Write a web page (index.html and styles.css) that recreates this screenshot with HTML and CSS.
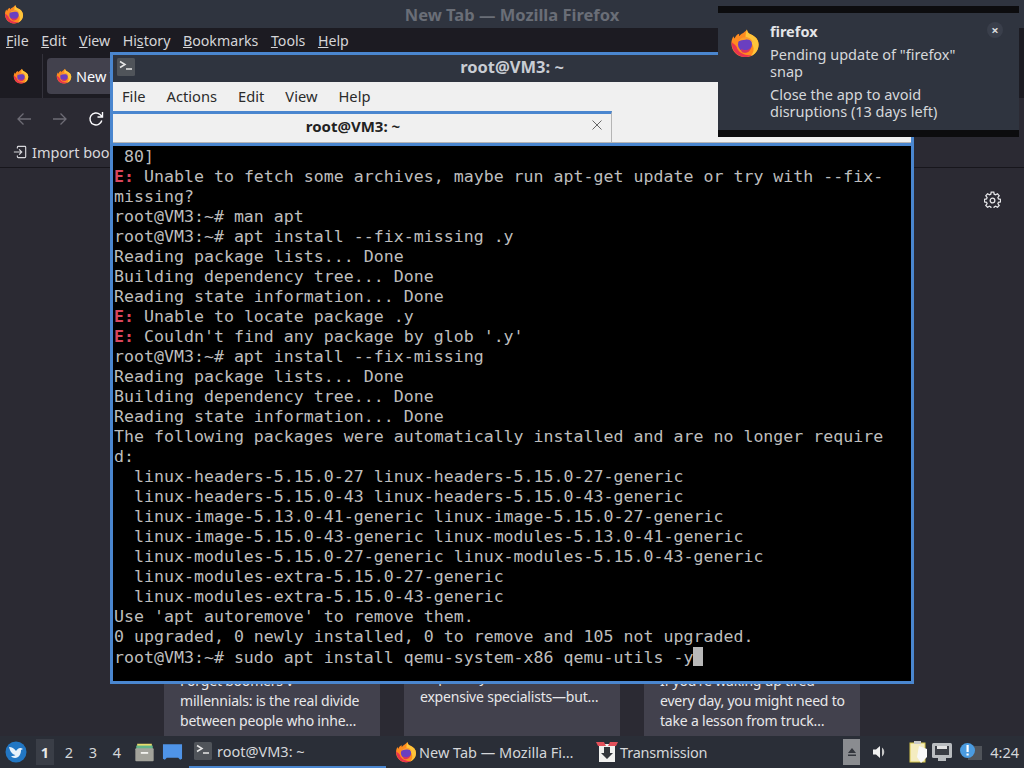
FILE: index.html
```html
<!DOCTYPE html>
<html lang="en">
<head>
<meta charset="utf-8">
<title>Desktop</title>
<link rel="stylesheet" href="styles.css">
</head>
<body>
<svg class="defs" width="0" height="0" aria-hidden="true">
  <defs>
    <symbol id="fx" viewBox="0 0 32 32">
      <path d="M16 31C7.5 31 1.5 24.5 1.5 16.5c0-3 .9-5.6 2.2-7.6.2 1 .7 1.8 1.3 2.4C5.600 8.500 7.500 6.500 10 6c-.5 1-.5 2 0 2.600C11.500 6 15.500 5 18 1.500c.5 3 2 4.500 4.500 5.500C27 9 30.500 12.500 30.500 17.500 30.500 25 24.500 31 16 31z" fill="#ff8a1f"/>
      <path d="M18 1.500c.5 3 2 4.500 4.500 5.500C27 9 30.500 12.500 30.500 17.500c0 6-3.500 10.500-8.500 12.500 3-3 4-7 2.500-11-1.500-4-5-5-7-7-1.500-2-1-6 .5-10.500z" fill="#ffc53a"/>
      <path d="M1.700 15C1.500 24 8 31 16 31c3 0 5.500-.8 7.500-2.200C17 30 9 27 7 20c-1-2-3.500-3-5.300-5z" fill="#e8344e"/>
      <circle cx="16" cy="17.500" r="7.500" fill="#6a3fc0"/>
      <path d="M9 14c2-3.500 6-5 10-4 3 .7 5 3 5.500 5.500-2-2.500-5-3.500-8-3-3 .3-5.500.8-7.500 1.500z" fill="#ff9d2a"/>
      <path d="M12 22c3 2.500 8 2 10.500-1.500-.5 4-4 6.500-7.500 6-2.500-.5-3.500-2.500-3-4.500z" fill="#d8345f"/>
    </symbol>
    <symbol id="prompt" viewBox="0 0 18 18">
      <rect width="18" height="18" rx="1.500" fill="#50545a"/>
      <path d="M3 3.500l5 3-5 3" fill="none" stroke="#e6e6e6" stroke-width="1.500"/>
      <path d="M9 11h6" stroke="#e6e6e6" stroke-width="1.500"/>
    </symbol>
  </defs>
</svg>

<div class="desktop">
  <div class="firefox">
    <div class="ff-title">
      <svg class="ff-title-logo"><use href="#fx"/></svg>
      <span class="ff-title-text">New Tab — Mozilla Firefox</span>
    </div>
    <nav class="ff-menu">
      <span><u>F</u>ile</span><span><u>E</u>dit</span><span><u>V</u>iew</span><span>Hi<u>s</u>tory</span><span><u>B</u>ookmarks</span><span><u>T</u>ools</span><span><u>H</u>elp</span>
    </nav>
    <div class="ff-tabs">
      <div class="ff-view"><svg class="ico16"><use href="#fx"/></svg></div>
      <div class="ff-tab"><svg class="ico16"><use href="#fx"/></svg><span>New Tab</span></div>
    </div>
    <div class="ff-toolbar">
      <svg class="tool dim" viewBox="0 0 16 16"><path d="M15 8H2M7.500 2.500L2 8l5.500 5.500" fill="none" stroke="currentColor" stroke-width="1.300"/></svg>
      <svg class="tool dim" viewBox="0 0 16 16"><path d="M1 8h13M8.500 2.500L14 8l-5.500 5.500" fill="none" stroke="currentColor" stroke-width="1.300"/></svg>
      <svg class="tool" viewBox="0 0 16 16"><path d="M13.800 9.500A6 6 0 1 1 12 3.500L14 5.500M14.500 1v5h-5" fill="none" stroke="currentColor" stroke-width="1.400"/></svg>
    </div>
    <div class="ff-bookmarks">
      <svg class="import" viewBox="0 0 16 16"><path d="M5 4V2.500A1 1 0 0 1 6 1.500h7.500a1 1 0 0 1 1 1v11a1 1 0 0 1-1 1H6a1 1 0 0 1-1-1V12M1 8h8M7 5l3 3-3 3" fill="none" stroke="currentColor" stroke-width="1.300"/></svg>
      <span>Import bookmarks…</span>
    </div>
    <main class="ff-content">
      <div class="gear-row">
        <svg class="gear" viewBox="0 0 16 16"><path d="M6.800 1h2.400l.4 2 1.300.6 1.800-1 1.600 1.800-1.200 1.700.5 1.300 2 .4v2.400l-2 .4-.5 1.300 1.200 1.700-1.600 1.700-1.800-1-1.300.6-.4 2H6.800l-.4-2-1.300-.6-1.800 1-1.600-1.700 1.200-1.700-.5-1.300-2-.4V7.800l2-.4.500-1.300L1.700 4.400l1.600-1.800 1.800 1 1.300-.6z" fill="none" stroke="currentColor" stroke-width="1.200"/><circle cx="8" cy="9" r="2.200" fill="none" stroke="currentColor" stroke-width="1.200"/></svg>
      </div>
      <div class="cards">
        <article class="card">Forget boomers v<br>millennials: is the real divide between people who inhe…</article>
        <article class="card short">Skip costly,<br>expensive specialists—but…</article>
        <article class="card">If you're waking up tired every day, you might need to take a lesson from truck…</article>
      </div>
    </main>
  </div>

  <footer class="panel">
    <svg class="start" viewBox="0 0 22 22"><circle cx="11" cy="11" r="10.500" fill="#2277c4"/><path d="M4 6c3 0 5 1.500 7 4 1-2 3-3.500 5-3l2 1-2 1c0 4-2 8-6 8-2 0-3-1-4-2 2 .3 3.500 0 4.500-1C7.500 13.500 5 10.500 4 6z" fill="#e8f2fb"/></svg>
    <div class="pager">
      <span class="page active">1</span><span class="page">2</span><span class="page">3</span><span class="page">4</span>
    </div>
    <svg class="launcher" viewBox="0 0 22 24"><path d="M3 3h16v6H3z" fill="#e7dc6c"/><path d="M2 5h18v4H2z" fill="#63b58a"/><rect x="1" y="8" width="20" height="14" rx="1" fill="#a3a39b"/><rect x="7" y="12" width="8" height="2" fill="#f2f2ee"/></svg>
    <svg class="launcher folder" viewBox="0 0 22 20"><path d="M1 2h20v15l-2 1-2-2H5l-2 2-2-1z" fill="#4f94e8"/></svg>
    <div class="task task-active"><svg class="ico18"><use href="#prompt"/></svg><span>root@VM3: ~</span></div>
    <div class="task task-ff"><svg class="ico22"><use href="#fx"/></svg><span>New Tab — Mozilla Fi…</span></div>
    <div class="task task-tr">
      <svg class="ico22" viewBox="0 0 22 22"><rect x="3" y="3" width="16" height="18" fill="#f1f1ef"/><path d="M0 1h8l2 4H2zM14 1h8l-2 4h-8z" fill="#e2505a"/><path d="M8 6h6v6h3l-6 6-6-6h3z" fill="#33363b"/></svg>
      <span>Transmission</span>
    </div>
    <div class="tray">
      <div class="eject"><svg viewBox="0 0 10 10" class="eject-ico"><path d="M5 1l4 5H1zM1 7.500h8V9H1z" fill="#33363d"/></svg></div>
      <svg class="tray-ico vol" viewBox="0 0 16 16"><path d="M1 5.500h3L8 2v12l-4-3.500H1z" fill="#f1f1f1"/><path d="M10 3.500c3 2.500 3 6.500 0 9z" fill="#c8c8c8"/></svg>
      <svg class="tray-ico clip" viewBox="0 0 20 24"><rect x="1" y="3" width="15" height="19" fill="#f4ecc0" stroke="#d8c84c"/><rect x="5" y="1" width="7" height="3" fill="#c9c9c9"/><path d="M10 6l8 3v8l-6 6-4-6z" fill="#f7f7f7"/></svg>
      <svg class="tray-ico net" viewBox="0 0 22 20"><rect x="1" y="1" width="20" height="15" rx="1.500" fill="#b9bcbf"/><rect x="4" y="4" width="14" height="9" fill="#3a3d44"/><path d="M6 4h10v3H6z" fill="#e2e2e2"/><rect x="7" y="16" width="8" height="3" fill="#b9bcbf"/></svg>
      <svg class="tray-ico alert" viewBox="0 0 22 20"><rect x="8" y="4" width="14" height="14" fill="#50545a"/><circle cx="7.500" cy="8.500" r="7.500" fill="#4a9be0"/><rect x="6.500" y="3" width="2.200" height="7" fill="#fff"/><rect x="6.500" y="11.500" width="2.200" height="2" fill="#fff"/></svg>
      <span class="clock">4:24</span>
    </div>
  </footer>

  <section class="terminal">
    <header class="term-title">
      <svg class="ico18 term-ico"><use href="#prompt"/></svg>
      <span>root@VM3: ~</span>
    </header>
    <nav class="term-menu"><span>File</span><span>Actions</span><span>Edit</span><span>View</span><span>Help</span></nav>
    <div class="term-tabs">
      <div class="term-tab"><span>root@VM3: ~</span><svg class="term-x" viewBox="0 0 10 10"><path d="M.5.5l9 9M9.500.5l-9 9" stroke="currentColor" fill="none"/></svg></div>
    </div>
<pre class="term-body"> 80]
<b>E:</b> Unable to fetch some archives, maybe run apt-get update or try with --fix-
missing?
root@VM3:~# man apt
root@VM3:~# apt install --fix-missing .y
Reading package lists... Done
Building dependency tree... Done
Reading state information... Done
<b>E:</b> Unable to locate package .y
<b>E:</b> Couldn't find any package by glob '.y'
root@VM3:~# apt install --fix-missing
Reading package lists... Done
Building dependency tree... Done
Reading state information... Done
The following packages were automatically installed and are no longer require
d:
  linux-headers-5.15.0-27 linux-headers-5.15.0-27-generic
  linux-headers-5.15.0-43 linux-headers-5.15.0-43-generic
  linux-image-5.13.0-41-generic linux-image-5.15.0-27-generic
  linux-image-5.15.0-43-generic linux-modules-5.13.0-41-generic
  linux-modules-5.15.0-27-generic linux-modules-5.15.0-43-generic
  linux-modules-extra-5.15.0-27-generic
  linux-modules-extra-5.15.0-43-generic
Use 'apt autoremove' to remove them.
0 upgraded, 0 newly installed, 0 to remove and 105 not upgraded.
root@VM3:~# sudo apt install qemu-system-x86 qemu-utils -y<span class="cursor"></span></pre>
  </section>

  <aside class="notify">
    <svg class="notify-logo"><use href="#fx"/></svg>
    <div class="notify-text">
      <h2>firefox</h2>
      <p>Pending update of "firefox" snap</p>
      <p>Close the app to avoid disruptions (13 days left)</p>
    </div>
    <span class="notify-x">×</span>
  </aside>
</div>
</body>
</html>
```

FILE: styles.css
```css
* { box-sizing: border-box; }
html, body { margin: 0; padding: 0; height: 100%; }
body { font-family: "Noto Sans", sans-serif; background: #2b2a33; overflow: hidden; }
.defs { position: absolute; }
.desktop { position: relative; width: 1024px; height: 768px; overflow: hidden; display: flex; flex-direction: column; }

.firefox { flex: 1; display: flex; flex-direction: column; min-height: 0; background: #2b2a33; color: #fbfbfe; }
.ff-title { height: 28px; background: #2f343f; display: flex; align-items: center; justify-content: center; position: relative; }
.ff-title-logo { position: absolute; left: 4px; top: 4px; width: 20px; height: 20px; }
.ff-title-text { font-weight: 700; font-size: 16.500px; color: #6a6e77; }
.ff-menu { height: 26px; background: #1c1b22; display: flex; gap: 12.500px; align-items: center; padding: 0 0 2px 6px; font-size: 14.200px; color: #d5d5d8; }
.ff-tabs { height: 44px; background: #1c1b22; display: flex; align-items: center; }
.ff-view { width: 43px; height: 44px; display: flex; align-items: center; justify-content: center; border-right: 1px solid #33323b; }
.ff-tab { margin-left: 4px; width: 200px; height: 36px; background: #42414d; border-radius: 4px; display: flex; align-items: center; gap: 4px; padding-left: 9px; font-size: 14.500px; }
.ico16 { width: 16px; height: 16px; flex: none; }
.ff-toolbar { height: 42px; background: #2b2a33; display: flex; align-items: center; padding-left: 16px; gap: 20px; color: #fbfbfe; }
.tool { width: 16px; height: 16px; }
.tool.dim { color: #6d6c75; }
.ff-bookmarks { height: 28px; background: #2b2a33; border-bottom: 1px solid #17161c; display: flex; align-items: center; gap: 5px; padding: 0 0 3px 13px; font-size: 14.500px; color: #d8d8dc; }
.import { width: 14px; height: 14px; }
.ff-content { flex: 1; display: flex; flex-direction: column; justify-content: space-between; min-height: 0; }
.gear-row { display: flex; justify-content: flex-end; padding: 23px 23px 0 0; }
.gear { width: 17px; height: 17px; color: #e5e5e8; }
.cards { display: flex; gap: 24px; padding-left: 164px; }
.card { width: 216px; height: 96px; background: #42414d; padding: 31px 10px 0 16px; font-size: 14px; letter-spacing: -.2px; line-height: 20px; color: #e8e8ea; }
.card:first-child { padding-right: 16px; }
.card.short { padding-top: 27px; }

.panel { height: 32px; background: #2a2e37; display: flex; align-items: center; color: #d5d7da; font-size: 14.500px; position: relative; }
.start { width: 22px; height: 22px; margin-left: 5px; flex: none; }
.pager { display: flex; margin-left: 9px; }
.page { width: 24px; height: 26px; display: flex; align-items: center; justify-content: center; }
.page.active { background: #3a3e47; font-weight: 700; width: 18px; margin-right: 3px; color: #e8e8e8; }
.launcher { width: 21px; height: 22px; margin-left: 5px; flex: none; }
.launcher.folder { margin-left: 7px; height: 20px; }
.task { display: flex; align-items: center; gap: 4px; height: 32px; flex: none; }
.task-active { width: 197px; margin-left: 6px; padding-left: 5px; gap: 5px; border-bottom: 2px solid #4a86cf; }
.task-ff { width: 201px; margin-left: 9px; gap: 2px; }
.task-tr { gap: 2px; }
.task-tr span { letter-spacing: -.2px; }
.ico18 { width: 18px; height: 18px; flex: none; }
.ico22 { width: 22px; height: 22px; flex: none; }
.tray { margin-left: auto; display: flex; align-items: center; }
.eject { width: 17px; height: 26px; background: #8a8c90; display: flex; align-items: center; justify-content: center; }
.eject-ico { width: 10px; height: 10px; }
.tray-ico { flex: none; }
.vol { width: 16px; height: 16px; margin-left: 12px; }
.clip { width: 20px; height: 24px; margin-left: 21px; }
.net { width: 22px; height: 20px; margin-left: 2px; }
.alert { width: 22px; height: 20px; margin-left: 7px; }
.clock { margin-left: 8px; margin-right: 5px; font-size: 14.500px; }

.terminal { position: absolute; left: 110px; top: 52px; width: 804px; height: 632px; border: 3px solid #4a86cf; background: #000; display: flex; flex-direction: column; }
.term-title { height: 27px; padding-bottom: 5px; background: #2f343f; display: flex; align-items: center; justify-content: center; position: relative; font-weight: 700; font-size: 16.500px; color: #c9cdd4; flex: none; }
.term-ico { position: absolute; left: 4px; top: 3px; }
.term-menu { height: 29px; background: #f0f0f0; display: flex; gap: 21px; align-items: center; padding: 0 0 2px 9px; font-size: 14.700px; color: #2b2b2b; flex: none; }
.term-tabs { height: 32px; background: #f0f0f0; flex: none; display: flex; border-bottom: 1px solid #b5b5b5; }
.term-tab { width: 499px; border-top: 3px solid #4a86cf; border-right: 1px solid #b5b5b5; background: #f0f0f0; position: relative; display: flex; align-items: center; justify-content: center; font-weight: 700; font-size: 15px; color: #222; padding: 0 18px 4px 0; }
.term-x { position: absolute; right: 9px; top: 6px; width: 10px; height: 10px; color: #666; }
.term-body { flex: 1; margin: 0; background: #000; border-top: 3px solid #4a86cf; color: #bdbdbd; font-family: "DejaVu Sans Mono", monospace; font-size: 16.600px; line-height: 20px; padding: 1px 0 0 1px; overflow: hidden; }
.term-body b { color: #d9475c; }
.cursor { display: inline-block; width: 10px; height: 19px; background: #b8b8b8; vertical-align: -3px; }

.notify { position: absolute; left: 718px; top: 6px; width: 301px; height: 131px; background: #2f343f; border-top: 7px solid #0c0c0e; border-bottom: 7px solid #0c0c0e; display: flex; padding: 10px 12px 0 12px; color: #d6d8db; font-size: 14.500px; line-height: 17px; }
.notify-logo { width: 30px; height: 32px; flex: none; margin-top: 4px; }
.notify-text { margin-left: 10px; width: 200px; }
.notify-text h2 { margin: 0 0 6px; font-size: 14.500px; line-height: 17px; font-weight: 700; color: #e4e5e7; }
.notify-text p { margin: 0 0 6px; }
.notify-x { position: absolute; right: 16px; top: 9px; width: 16px; height: 16px; border-radius: 50%; background: #3a3f4b; display: flex; align-items: center; justify-content: center; font-size: 13px; font-weight: 700; }
```
